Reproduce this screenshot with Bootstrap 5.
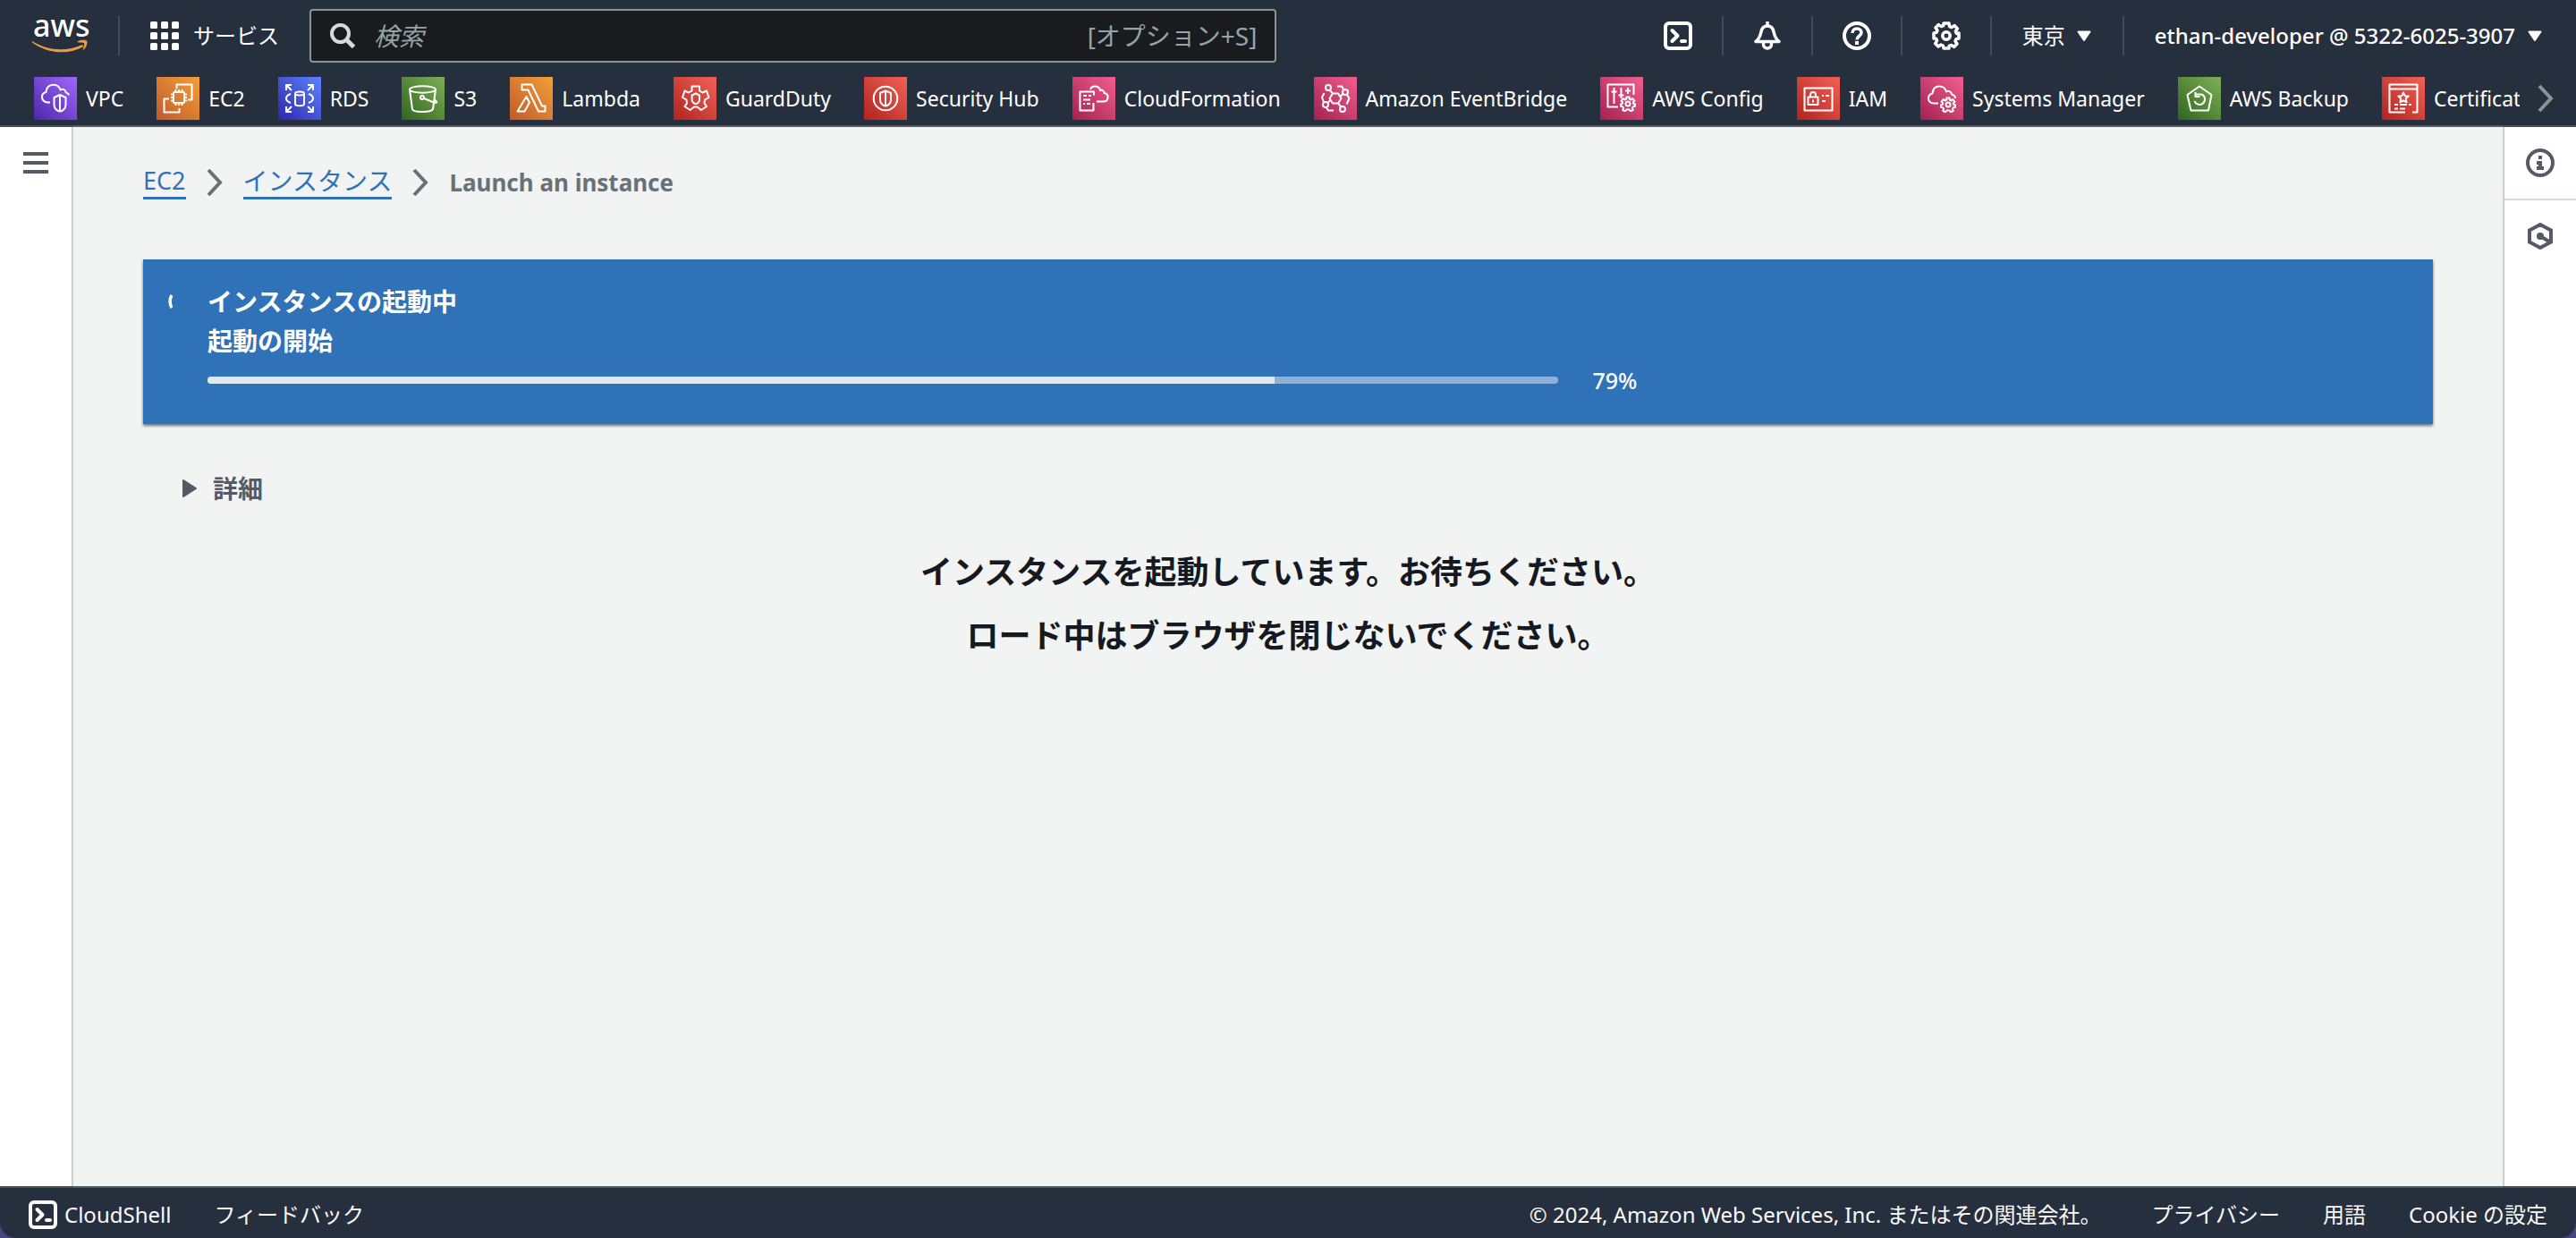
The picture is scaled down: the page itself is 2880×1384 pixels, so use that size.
<!DOCTYPE html>
<html lang="ja">
<head>
<meta charset="utf-8">
<meta name="viewport" content="width=device-width, initial-scale=1">
<title>Launch an instance | EC2</title>
<link rel="stylesheet" href="https://cdn.jsdelivr.net/npm/bootstrap@5.3.0/dist/css/bootstrap.min.css">
<style>
  :root { --ink:#16191f; --bar:#262f3e; --edge:#545b64; --muted:#879596; --link:#3072b7; }
  body { font-family:"Noto Sans","Noto Sans CJK JP",sans-serif; font-size:24px; line-height:36px; color:var(--ink); background:#4a4580; }
  button { font-family:inherit; }
  svg { display:block; flex:none; }
  .ln { fill:none; stroke:currentColor; stroke-width:2; stroke-linejoin:round; stroke-linecap:butt; }
  .bare { background:none; border:0; padding:0; color:inherit; }
  .top-bar { background:var(--bar); color:#fff; border-bottom:2px solid var(--edge); }
  .top-row { height:80px; padding-left:34px; }
  .brand-box { width:100px; height:44px; border-right:2px solid #434a54; }
  .services-btn { margin:0 34px; gap:16px; line-height:36px; white-space:nowrap; flex:none; }
  .search-box { width:38%; height:60px; background:#1a1b1f; border:2px solid var(--muted); border-radius:4px; padding:0 20px; font-size:28px; color:#95a5a6; }
  .search-box input { background:none; border:0; outline:0; color:#fff; padding:0 0 0 20px; min-width:0; }
  .search-box input::placeholder { color:#95a5a6; font-style:italic; opacity:1; }
  .tool-btn { width:100px; height:44px; border-right:2px solid #434a54; }
  .region-btn { height:44px; width:148px; padding-left:34px; gap:13px; border-right:2px solid #434a54; }
  .account-btn { padding:0 38px 0 34px; gap:14px; font-weight:500; }
  .fav-row { height:60px; padding:0 24px 0 38px; }
  .fav-list { gap:37px; white-space:nowrap; overflow:hidden; margin-right:19px; font-size:23px; font-weight:450; }
  .fav-list a { color:#fff; gap:10px; flex:none; }
  .tile { width:48px; height:48px; }
  .t-violet { background:linear-gradient(45deg,#4d27a8,#a166ff); }
  .t-orange { background:linear-gradient(45deg,#c05a2b,#f2a038); }
  .t-blue { background:linear-gradient(45deg,#2e27ad,#5c83ff); }
  .t-green { background:linear-gradient(45deg,#2f651e,#7eb055); }
  .t-red { background:linear-gradient(45deg,#b0241f,#f26157); }
  .t-pink { background:linear-gradient(45deg,#a4214f,#f15f90); }
  .side { width:80px; background:#fff; color:var(--edge); z-index:1; box-shadow:0 0 2px 1px rgba(0,28,36,.3); }
  .side-left { padding-top:28px; }
  .side-btn { height:80px; width:80px; }
  .side-btn + .side-btn { height:82px; border-top:2px solid #d5dbdb; }
  .page-body { background:#f2f3f3; padding:42px 80px 0; min-width:0; }
  .crumbs { font-size:27px; line-height:36px; gap:22px; color:#687078; }
  .crumbs a { color:var(--link); border-bottom:3px solid var(--link); }
  .crumbs a[lang] { font-size:28px; }
  .crumbs b { font-size:26px; }
  .flash { background:#3072b7; color:#fff; height:184px; padding:25px 28px; margin-top:67px; box-shadow:0 2px 3px rgba(0,28,36,.6); font-size:28px; line-height:44px; }
  .flash-text { padding-left:39px; }
  .bar-wrap { gap:38px; }
  .bar-value { font-size:25px; font-weight:500; }
  .progress.launch { width:61.4%; height:8px; border-radius:6px; background:#8fb0d7; }
  .launch .progress-bar { background:#dfe8f3; }
  .details-box { margin:50px 0 0 44px; font-size:28px; line-height:44px; font-weight:700; color:var(--edge); }
  .details-box summary { list-style:none; gap:18px; width:max-content; }
  .wait { margin-top:36px; font-size:36px; line-height:71px; font-weight:700; }
  .foot { background:var(--bar); color:#fff; border-top:2px solid var(--edge); height:58px; padding:4px 32px 0; border-radius:0 0 18px 18px; }
  .foot a, .foot span { color:#fafafa; }
  .foot-wrap { background:linear-gradient(#f2f3f3 50%,#4a4580 50%); }
</style>
<script src="https://cdn.jsdelivr.net/npm/bootstrap@5.3.0/dist/js/bootstrap.bundle.min.js"></script>
</head>
<body class="d-flex flex-column min-vh-100">
<svg width="0" height="0" class="position-absolute" aria-hidden="true">
  <symbol id="shell" viewBox="0 0 32 32"><rect x="2" y="2" width="28" height="28" rx="4" fill="none" stroke="currentColor" stroke-width="4"/><path d="M9.500 10l6 6-6 6" fill="none" stroke="currentColor" stroke-width="4" stroke-linecap="round" stroke-linejoin="round"/><path d="M20 22h4" stroke="currentColor" stroke-width="4" stroke-linecap="round"/></symbol>
  <symbol id="caret" viewBox="0 0 16 13"><path d="M1.500 1.500h13L8 11z" fill="currentColor" stroke="currentColor" stroke-width="2" stroke-linejoin="round"/></symbol>
  <symbol id="chev" viewBox="0 0 20 32"><path d="M3 2l13 14L3 30" fill="none" stroke="currentColor" stroke-width="4"/></symbol>
  <symbol id="minigear" viewBox="0 0 18 18"><path class="ln" d="M7.300 1.500h3.400v2.200l1.800.8 1.700-1.400 2.200 2.600-1.500 1.500.5 2h1.600v2.600l-2.300.6-.8 1.500.9 2-2.600 1.400-1.500-1.700H7.300l-1.500 1.700-2.600-1.400.9-2-.8-1.500-2.300-.6V9.200h1.600l.5-2-1.500-1.500 2.200-2.600 1.700 1.400 1.800-.8z"/><circle class="ln" cx="9" cy="9" r="2.500"/></symbol>
</svg>

<header class="top-bar">
  <div class="top-row d-flex align-items-center">
    <a href="#" class="brand-box d-flex align-items-center text-decoration-none flex-shrink-0" aria-label="AWS">
      <svg width="68" height="44" viewBox="0 0 68 44" overflow="visible"><text x="3" y="23" font-size="34" font-weight="500" fill="#fff">aws</text><path d="M2 28c18 11 38 12 56 4l1.500 2C42 44 18 42 1.500 29z" fill="#ec9c3b"/><path d="M53 28c4-2 9-1.500 10-.5s.5 7-3.500 10c-.7.500-1 0-.8-.6 1-2.500 2-5.500 1.300-6.700-.8-1-4-.8-6.400-.8-.8 0-1.200-.7-.6-1.400z" fill="#ec9c3b"/></svg>
    </a>
    <button type="button" class="bare services-btn d-flex align-items-center">
      <svg width="32" height="32" viewBox="0 0 32 32" fill="#fff"><g id="g3"><rect width="8" height="8" rx="1.500"/><rect x="12" width="8" height="8" rx="1.500"/><rect x="24" width="8" height="8" rx="1.500"/></g><use href="#g3" y="12"/><use href="#g3" y="24"/></svg>
      <span>サービス</span>
    </button>
    <form class="search-box d-flex align-items-center" role="search">
      <svg width="30" height="30" viewBox="0 0 30 30" fill="none" stroke="#d5dbdb"><circle cx="12.500" cy="12.500" r="9.500" stroke-width="4"/><path d="M19 19l8.500 8.500" stroke-width="5"/></svg>
      <label for="q" class="visually-hidden">検索</label>
      <input id="q" type="text" class="flex-grow-1" placeholder="検索">
      <span class="text-nowrap">[オプション+S]</span>
    </form>
    <div class="d-flex align-items-center ms-auto flex-shrink-0">
      <button type="button" class="bare tool-btn d-flex align-items-center justify-content-center" aria-label="CloudShell"><svg width="32" height="32"><use href="#shell"/></svg></button>
      <button type="button" class="bare tool-btn d-flex align-items-center justify-content-center" aria-label="通知"><svg width="32" height="32" viewBox="0 0 32 32" fill="none" stroke="#fff" stroke-width="3.500" stroke-linejoin="round"><path d="M3 22.500c4-3 5-6 6-11 .8-4 3.500-6.500 7-6.500s6.200 2.500 7 6.500c1 5 2 8 6 11z"/><path d="M16 0v5M11.500 23v2.500a4.500 4.500 0 0 0 9 0V23"/></svg></button>
      <button type="button" class="bare tool-btn d-flex align-items-center justify-content-center" aria-label="ヘルプ"><svg width="32" height="32" viewBox="0 0 32 32" fill="none" stroke="#fff"><circle cx="16" cy="16" r="14" stroke-width="4"/><path d="M11 13c0-3 2-5 5-5s5 2 5 4.500c0 4-5 3.500-5 8" stroke-width="3.500"/><path d="M16 22v4" stroke-width="4"/></svg></button>
      <button type="button" class="bare tool-btn d-flex align-items-center justify-content-center" aria-label="設定"><svg width="32" height="32" viewBox="0 0 32 32" fill="none" stroke="#fff" stroke-linejoin="round"><path stroke-width="3.500" d="M13 2h6l.6 3.600 2.400 1 3-2 3.400 3.400-2 3 1 2.400L30 13v6l-3 .600-1 2.400 2 3-3.400 3.400-3-2-2.400 1L19 30h-6l-.6-3-2.400-1-3 2L3.600 24.600l2-3-1-2.400L2 19v-6l3-.6 1-2.400-2-3 3.400-3.400 3 2 2.400-1z"/><circle cx="16" cy="16" r="4.200" stroke-width="3.500"/></svg></button>
      <button type="button" class="bare region-btn d-flex align-items-center"><span>東京</span><svg width="16" height="13"><use href="#caret"/></svg></button>
      <button type="button" class="bare account-btn d-flex align-items-center"><span>ethan-developer @ 5322-6025-3907</span><svg width="16" height="13"><use href="#caret"/></svg></button>
    </div>
  </div>
  <nav class="fav-row d-flex align-items-center" aria-label="お気に入り">
    <div class="fav-list d-flex flex-grow-1">
      <a href="#" class="d-flex align-items-center text-decoration-none"><svg class="tile t-violet" viewBox="0 0 48 48"><path class="ln" d="M18 28.500h-2.500c-4 0-7-3-6.500-7 .4-2.500 2-4 4.500-4.500C13.500 12 17 8.700 21.500 8.700c4 0 7 2 8 5.800 2-1.500 5.500-1 6 2.500l4 3"/><path class="ln" d="M29 20l6.500 3v8.500c0 4-4 7-6.500 7s-6.500-3-6.500-7V23zM29 20v18"/></svg>VPC</a>
      <a href="#" class="d-flex align-items-center text-decoration-none"><svg class="tile t-orange" viewBox="0 0 48 48"><path class="ln" d="M22.500 13V8.500h17v17H35M14 24.500H8.500v15h17V35"/><rect class="ln" x="19" y="17" width="12" height="12" rx="1"/><path class="ln" d="M21.500 14v3m3.500-3v3m3.500-3v3m-7 12v3m3.500-3v3m3.500-3v3M16 19.500h3m-3 3.500h3m-3 3.500h3m12-7h3m-3 3.500h3m-3 3.500h3"/></svg>EC2</a>
      <a href="#" class="d-flex align-items-center text-decoration-none"><svg class="tile t-blue" viewBox="0 0 48 48"><path class="ln" d="M9 15V9h6M9 9l6 6M33 9h6v6M39 9l-6 6M9 33v6h6M9 39l6-6M33 39h6v-6M39 39l-6-6M14 19c-3 1-5 3-5 5s2 4 5 5M34 19c3 1 5 3 5 5s-2 4-5 5M19 19v11c0 3 10 3 10 0V19"/><ellipse class="ln" cx="24" cy="18.500" rx="5" ry="2"/></svg>RDS</a>
      <a href="#" class="d-flex align-items-center text-decoration-none"><svg class="tile t-green" viewBox="0 0 48 48"><ellipse class="ln" cx="23.500" cy="14" rx="14.500" ry="3.700"/><path class="ln" d="M9 14l3 22c1 4 21 4 23 0l3-22M25 24l11 4.500c4 1 4-.5 1-3"/><circle class="ln" cx="23" cy="23" r="2"/></svg>S3</a>
      <a href="#" class="d-flex align-items-center text-decoration-none"><svg class="tile t-orange" viewBox="0 0 48 48"><path class="ln" d="M13.500 8.500h11l11.500 24h3.500v6H32L20.500 14.500h-7zM18.500 22l-10 16.500h8l5.500-10z"/></svg>Lambda</a>
      <a href="#" class="d-flex align-items-center text-decoration-none"><svg class="tile t-red" viewBox="0 0 48 48"><path class="ln" d="M20.500 10.500H29v5l3.500 2 4.500-2 2.500 7.500-4.500 2.500-.5 4 2.500 3.500-6 4-4.500-3.500H23L18.500 37l-6-4 2.500-3.500-.5-4L10 23l2.500-7.500 4.500 2 3.500-2z"/><path class="ln" d="M24.800 18.500l4.200 2v5.500c0 2-2.500 4-4.200 4s-4.200-2-4.200-4v-5.500z"/></svg>GuardDuty</a>
      <a href="#" class="d-flex align-items-center text-decoration-none"><svg class="tile t-red" viewBox="0 0 48 48"><circle class="ln" cx="24" cy="24" r="13.300"/><path class="ln" d="M24 15.500l6 2.500v8c0 4-4 6.500-6 6.500S18 30 18 26v-8zM24 15.500v17"/></svg>Security Hub</a>
      <a href="#" class="d-flex align-items-center text-decoration-none"><svg class="tile t-pink" viewBox="0 0 48 48"><path class="ln" d="M24 20.500v-4H8.500v21h15V29M12 21h4m2 0h3M12 25.500h8M12 30h2m2 0h4M20 14c1-3 3-3.500 5-3.500 3.500 0 5.500 2 6 4.500 2-1 4 0 4.500 3 3 .5 4.500 2.500 4 5.500s-2.500 4-5 4H27"/></svg>CloudFormation</a>
      <a href="#" class="d-flex align-items-center text-decoration-none"><svg class="tile t-pink" viewBox="0 0 48 48"><path class="ln" d="M21 18.500h6l3.500 5.500-3.500 5.500h-6L17.500 24zM17.500 14.500l3.500 4M27 29.500l3.500 4M32 19l-2.500 3M18 26.500l-3 2.500M26 10.500h5l2 3M22 37.500h-6l-2-3M11.500 18L9 23l2 5M37 20l2.500 4-3 6.500"/><circle class="ln" cx="16" cy="12" r="3"/><circle class="ln" cx="35" cy="17" r="3"/><circle class="ln" cx="13" cy="31" r="3"/><circle class="ln" cx="32" cy="36" r="3"/></svg>Amazon EventBridge</a>
      <a href="#" class="d-flex align-items-center text-decoration-none"><svg class="tile t-pink" viewBox="0 0 48 48"><path class="ln" d="M20 33.500H8.500v-25h29V20M15.500 12v18M12.500 16.500h6M23.500 12v12M20.500 20.500h6M31 12v7M28 15.500h6"/><use href="#minigear" x="22" y="21" width="18" height="18"/></svg>AWS Config</a>
      <a href="#" class="d-flex align-items-center text-decoration-none"><svg class="tile t-red" viewBox="0 0 48 48"><rect class="ln" x="8.500" y="12.500" width="31" height="25"/><path class="ln" d="M12.500 22.500h11v8.500h-11zM15 22.500V20c0-4 6-4 6 0v2.500M18 25.500v3M28 21h2m2 0h4M28 27h4"/></svg>IAM</a>
      <a href="#" class="d-flex align-items-center text-decoration-none"><svg class="tile t-pink" viewBox="0 0 48 48"><path class="ln" d="M20 29.500h-5c-4 0-6.500-3-6-6.500.4-3 2.500-4 4.500-4.500.5-5 3.500-8 7.500-8s7 2 8 6c2-1.500 5.500-.5 6 3 2 .5 4 2 4 4.500"/><use href="#minigear" x="22" y="22" width="18" height="18"/></svg>Systems Manager</a>
      <a href="#" class="d-flex align-items-center text-decoration-none"><svg class="tile t-green" viewBox="0 0 48 48"><path class="ln" d="M24 10.500L37.500 20 34 37.500H14.500L10.500 20zM18.500 27c1.500 4 7 5.500 10 2s1.500-8.500-2.500-9.500h-6M19.500 17v5h5"/></svg>AWS Backup</a>
      <a href="#" class="d-flex align-items-center text-decoration-none"><svg class="tile t-red" viewBox="0 0 48 48"><path class="ln" d="M26 39.500H8.500v-31h31v31H34M8.500 13.500h31M14 31h4m2 0h8m2 0h3M14 35.500h4m2 0h6M24 17.500l1.700 3.700 4 .4-3 2.700.9 4-3.600-2-3.600 2 .9-4-3-2.700 4-.4z"/></svg>Certificate Manager</a>
    </div>
    <button type="button" class="bare" aria-label="次へ"><svg width="20" height="32" color="#879596"><use href="#chev"/></svg></button>
  </nav>
</header>

<div class="d-flex flex-grow-1">
  <aside class="side side-left flex-shrink-0 d-flex justify-content-center">
    <button type="button" class="bare align-self-start" aria-label="メニュー"><svg width="28" height="24" viewBox="0 0 28 24" fill="currentColor"><path d="M0 0h28v4H0zM0 10h28v4H0zM0 20h28v4H0z"/></svg></button>
  </aside>
  <main class="page-body flex-grow-1">
    <nav class="crumbs d-flex align-items-center" aria-label="breadcrumb">
      <a href="#" class="text-decoration-none">EC2</a>
      <svg width="20" height="32"><use href="#chev"/></svg>
      <a href="#" lang="ja" class="text-decoration-none">インスタンス</a>
      <svg width="20" height="32"><use href="#chev"/></svg>
      <b>Launch an instance</b>
    </nav>
    <section class="flash d-flex" role="status">
      <svg width="5" height="44" viewBox="0 0 5 44"><path d="M4 15c-2.500 4-2.500 10 0 14" fill="none" stroke="#fff" stroke-width="3.500"/></svg>
      <div class="flash-text flex-grow-1">
        <div class="fw-bold">インスタンスの起動中</div>
        <div class="fw-bold">起動の開始</div>
        <div class="bar-wrap d-flex align-items-center">
          <div class="progress launch" role="progressbar" aria-label="起動の開始" aria-valuenow="79" aria-valuemin="0" aria-valuemax="100"><div class="progress-bar" style="width:79%"></div></div>
          <span class="bar-value">79%</span>
        </div>
      </div>
    </section>
    <details class="details-box">
      <summary class="d-flex align-items-center"><svg width="16" height="20" viewBox="0 0 16 20"><path d="M1 1l14 9-14 9z" fill="currentColor" stroke="currentColor" stroke-width="2" stroke-linejoin="round"/></svg>詳細</summary>
    </details>
    <div class="wait text-center">
      <div>インスタンスを起動しています。お待ちください。</div>
      <div>ロード中はブラウザを閉じないでください。</div>
    </div>
  </main>
  <aside class="side flex-shrink-0">
    <button type="button" class="bare side-btn d-flex align-items-center justify-content-center" aria-label="情報"><svg width="32" height="32" viewBox="0 0 32 32"><circle cx="16" cy="16" r="14" fill="none" stroke="currentColor" stroke-width="4"/><path d="M14 8h4v4h-4zM12 14h6v6h2v4h-8v-4h2v-2h-2z" fill="currentColor"/></svg></button>
    <button type="button" class="bare side-btn d-flex align-items-center justify-content-center" aria-label="チュートリアル"><svg width="32" height="32" viewBox="0 0 32 32"><path d="M16 3l12 6.500v13L16 29 4 22.500v-13z" fill="none" stroke="currentColor" stroke-width="4"/><circle cx="16" cy="16" r="4" fill="currentColor"/><path d="M16 16l10 6" stroke="currentColor" stroke-width="4"/></svg></button>
  </aside>
</div>

<div class="foot-wrap">
<footer class="foot d-flex align-items-center">
  <a href="#" class="d-flex align-items-center text-decoration-none"><svg width="32" height="32"><use href="#shell"/></svg><span class="ms-2">CloudShell</span></a>
  <a href="#" class="text-decoration-none ms-5">フィードバック</a>
  <span class="ms-auto me-2">© 2024, Amazon Web Services, Inc. またはその関連会社。</span>
  <a href="#" class="text-decoration-none ms-5">プライバシー</a>
  <a href="#" class="text-decoration-none ms-5">用語</a>
  <a href="#" class="text-decoration-none ms-5">Cookie の設定</a>
</footer>
</div>
</body>
</html>
